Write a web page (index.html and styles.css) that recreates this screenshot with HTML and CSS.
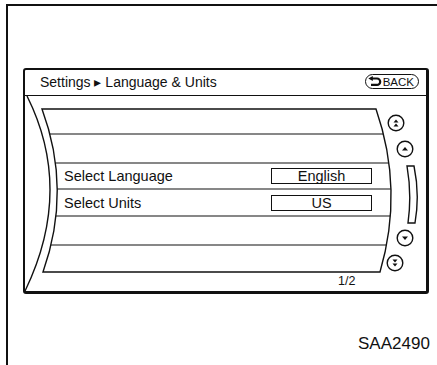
FILE: index.html
```html
<!DOCTYPE html>
<html lang="en">
<head>
    <meta charset="UTF-8">
    <meta name="viewport" content="width=device-width, initial-scale=1.0">
    <title>Language &amp; Units</title>
    <link rel="stylesheet" href="styles.css">
</head>
<body>

    <div class="sheet">
        <div class="screen">
            <div class="screen-head">
                <span class="crumb">Settings ▸ Language &amp; Units</span>
                <span class="back-btn">
                    <svg class="back-icon" width="14" height="11" viewBox="0 0 14 11">
                        <path d="M4 2.5 H9 A3.2 3.2 0 0 1 9 8.9 H3" fill="none" stroke="#111" stroke-width="2.2"/>
                        <path d="M0.3 2.5 L4.8 0 L4.8 5 Z" fill="#111"/>
                    </svg>BACK
                </span>
            </div>

            <div class="screen-body">
                <!-- curved list frame, drawn under the rows -->
                <svg class="frame-art" width="401" height="195" viewBox="25 96 401 195">
                    <defs>
                        <clipPath id="rowArea">
                            <path d="M42 109 H376 Q404 190 380 272 H43 Q72 190 42 109 Z"/>
                        </clipPath>
                    </defs>
                    <path d="M27 96 Q74 190 25 291" fill="none" stroke="#111" stroke-width="1.4"/>
                    <g clip-path="url(#rowArea)" stroke="#111" stroke-width="1.2">
                        <line x1="30" y1="134" x2="420" y2="134"/>
                        <line x1="30" y1="163" x2="420" y2="163"/>
                        <line x1="30" y1="189" x2="420" y2="189"/>
                        <line x1="30" y1="216" x2="420" y2="216"/>
                        <line x1="30" y1="245" x2="420" y2="245"/>
                    </g>
                    <path d="M42 109 H376 Q404 190 380 272 H43 Q72 190 42 109 Z" fill="none" stroke="#111" stroke-width="1.4"/>
                </svg>

                <div class="list">
                    <div class="row"></div>
                    <div class="row"></div>
                    <div class="row">
                        <span class="label">Select Language</span>
                        <span class="value">English</span>
                    </div>
                    <div class="row">
                        <span class="label">Select Units</span>
                        <span class="value">US</span>
                    </div>
                    <div class="row"></div>
                    <div class="row"></div>
                    <div class="page-no">1/2</div>
                </div>

                <div class="side">
                    <svg class="knob knob-1" width="18" height="18" viewBox="0 0 18 18">
                        <circle cx="9" cy="9" r="7.8" fill="none" stroke="#111" stroke-width="1.4"/>
                        <path d="M6.5 8.5 L9 5.5 L11.5 8.5 Z M6.5 12.5 L9 9.5 L11.5 12.5 Z" fill="#111"/>
                    </svg>
                    <svg class="knob knob-2" width="18" height="18" viewBox="0 0 18 18">
                        <circle cx="9" cy="9" r="7.8" fill="none" stroke="#111" stroke-width="1.4"/>
                        <path d="M6 10.5 L9 7 L12 10.5 Z" fill="#111"/>
                    </svg>
                    <svg class="scroll" width="14" height="59" viewBox="0 0 14 59">
                        <path d="M1 1 H8 Q14 29.5 9 58 H2 Q6 29.5 1 1 Z" fill="none" stroke="#111" stroke-width="1.4"/>
                    </svg>
                    <svg class="knob knob-3" width="18" height="18" viewBox="0 0 18 18">
                        <circle cx="9" cy="9" r="7.8" fill="none" stroke="#111" stroke-width="1.4"/>
                        <path d="M6 7.5 L9 11 L12 7.5 Z" fill="#111"/>
                    </svg>
                    <svg class="knob knob-4" width="18" height="18" viewBox="0 0 18 18">
                        <circle cx="9" cy="9" r="7.8" fill="none" stroke="#111" stroke-width="1.4"/>
                        <path d="M6.5 5.5 L9 8.5 L11.5 5.5 Z M6.5 9.5 L9 12.5 L11.5 9.5 Z" fill="#111"/>
                    </svg>
                </div>
            </div>
        </div>

        <div class="code">SAA2490</div>
    </div>

</body>
</html>
```

FILE: styles.css
```css
html, body {
    margin: 0;
    background: #fff;
}
body {
    width: 437px;
    height: 365px;
    overflow: hidden;
    font-family: "Liberation Sans", Arial, sans-serif;
    color: #111;
}
.sheet {
    margin: 4px 0 0 6px;
    height: 361px;
    border-top: 2px solid #111;
    border-left: 2px solid #111;
    padding: 62px 0 0 15px;
    box-sizing: border-box;
}
.screen {
    width: 406px;
    height: 226px;
    box-sizing: border-box;
    border: 2px solid #111;
    border-right-width: 3px;
    border-bottom-width: 3px;
    border-radius: 3px;
}
.screen-head {
    height: 25px;
    border-bottom: 1px solid #111;
    display: flex;
    align-items: center;
    justify-content: space-between;
    padding: 0 7px 0 15px;
}
.crumb {
    font-size: 14px;
    margin-top: -2px;
}
.back-btn {
    display: flex;
    align-items: center;
    gap: 1px;
    height: 13px;
    padding: 0 4px 0 2px;
    border: 1.5px solid #111;
    border-radius: 8px;
    font-size: 11.5px;
    margin-top: -2px;
}
.screen-body {
    position: relative;
    height: 195px;
    display: grid;
    grid-template-columns: 360px 1fr;
}
.frame-art {
    position: absolute;
    left: 0;
    top: 0;
}
.list {
    position: relative;
    padding-top: 13px;
    display: grid;
    grid-template-rows: 25px 29px 26px 27px 29px 27px 19px;
}
.row {
    display: flex;
    align-items: center;
    padding-left: 39px;
    font-size: 14.5px;
}
.label {
    flex: 0 0 207px;
}
.value {
    width: 101px;
    height: 16px;
    box-sizing: border-box;
    border: 1.3px solid #111;
    text-align: center;
    line-height: 14px;
    font-size: 14.5px;
}
.page-no {
    padding-left: 313px;
    font-size: 12.5px;
    line-height: 19px;
}
.side {
    position: relative;
    display: flex;
    flex-direction: column;
    align-items: flex-start;
    padding-top: 18px;
}
.knob-1 { margin-left: 2px; }
.knob-2 { margin: 8px 0 0 11px; }
.scroll { margin: 7px 0 0 21px; }
.knob-3 { margin: 5px 0 0 11px; }
.knob-4 { margin: 7px 0 0 1px; }
.code {
    margin: 40px 0 0 335px;
    font-size: 17px;
}
```
